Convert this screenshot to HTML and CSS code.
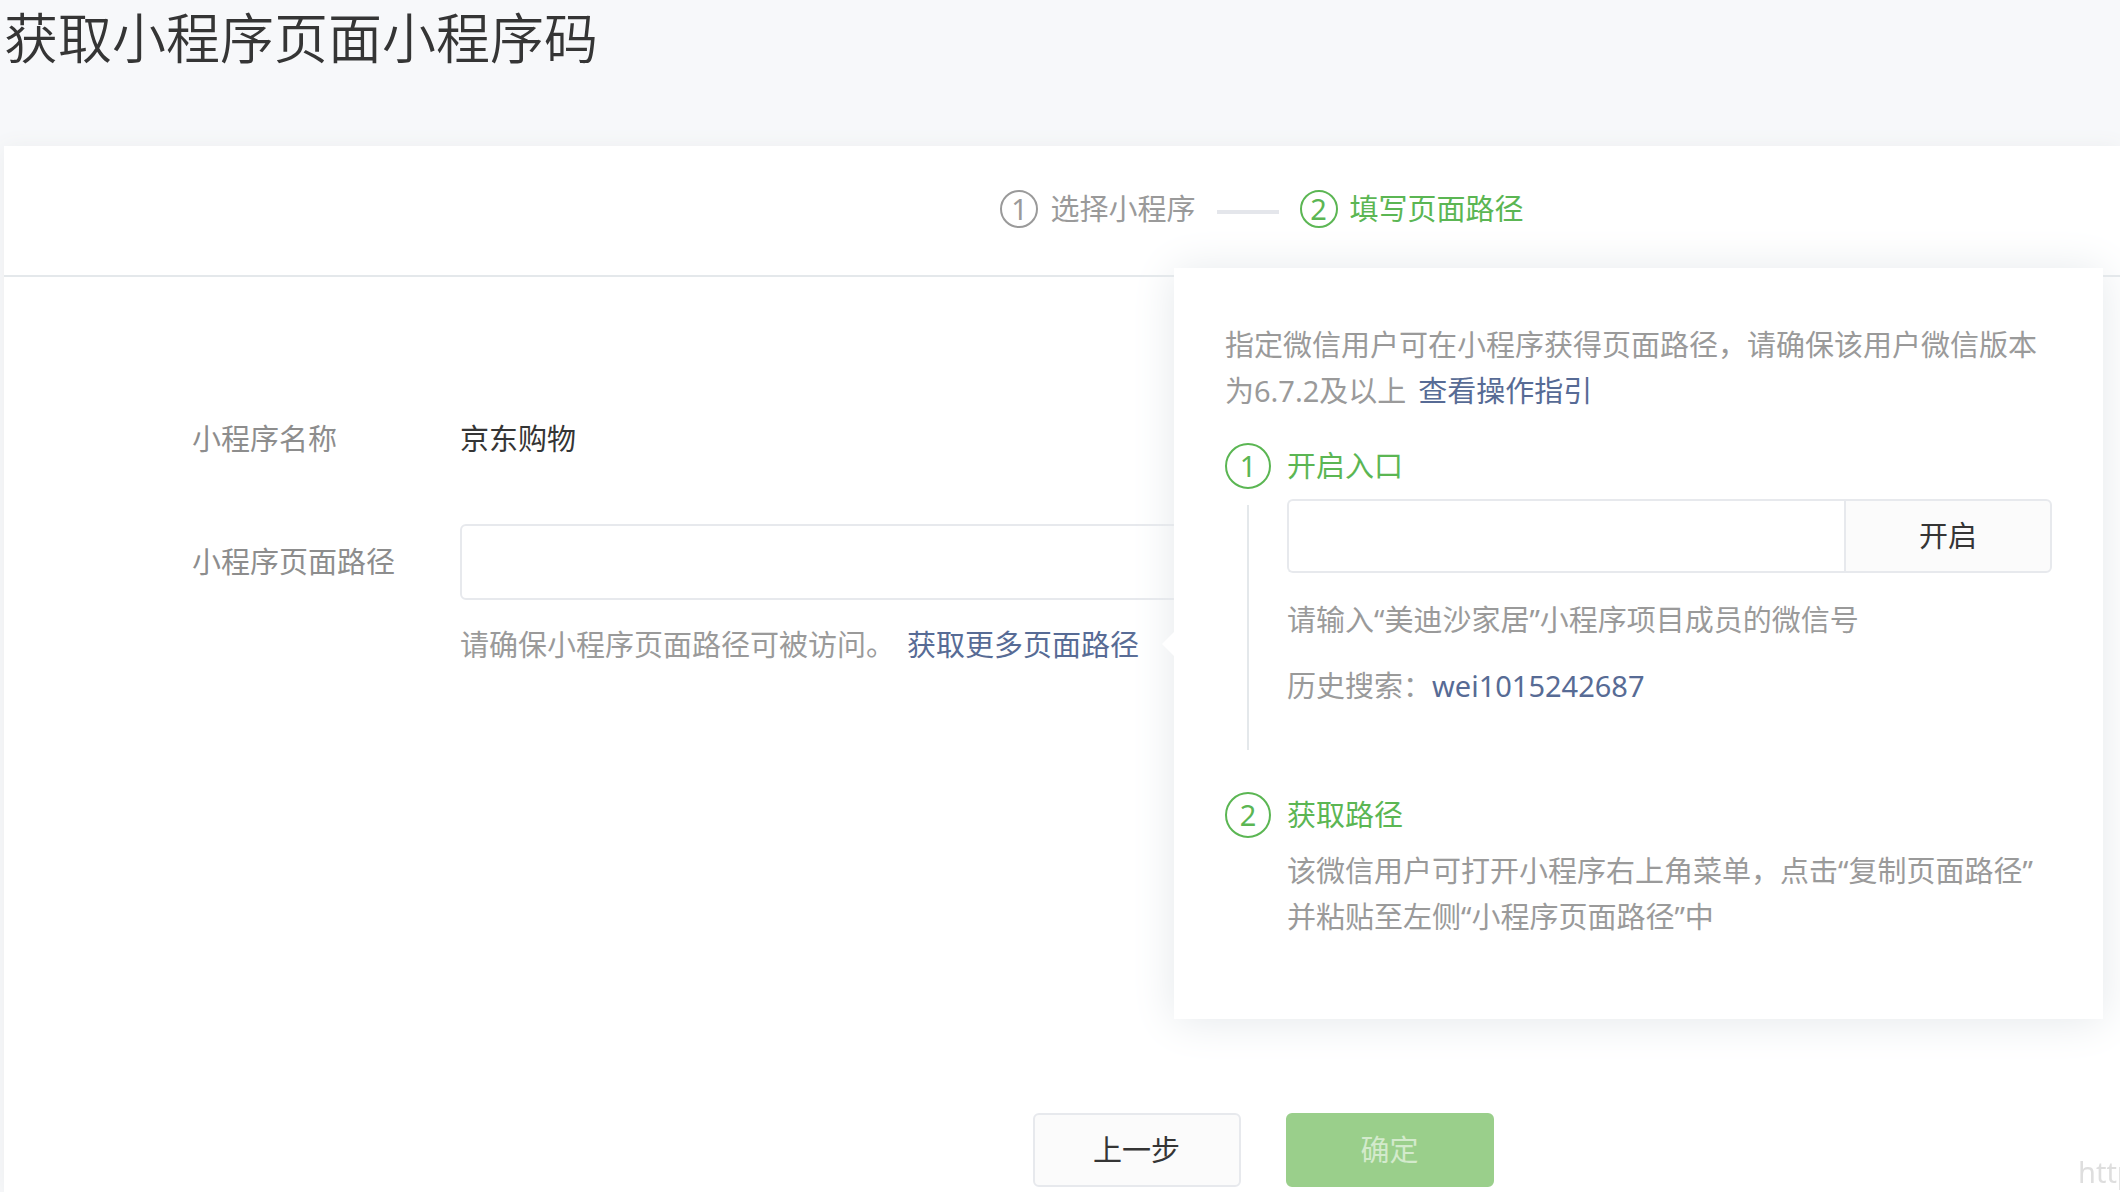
FILE: index.html
```html
<!DOCTYPE html>
<html lang="zh-CN">
<head>
    <meta charset="UTF-8">
    <meta name="viewport" content="width=device-width, initial-scale=1.0">
    <title>获取小程序页面小程序码</title>
    <link rel="stylesheet" href="styles.css">
</head>
<body>
    <h1>获取小程序页面小程序码</h1>
    <main class="card">
        <ol class="steps">
            <li class="step"><span class="num">1</span>选择小程序</li>
            <li class="step-line" aria-hidden="true"></li>
            <li class="step active"><span class="num">2</span>填写页面路径</li>
        </ol>
        <form class="form">
            <div class="row">
                <span class="label">小程序名称</span>
                <span class="value">京东购物</span>
            </div>
            <div class="row">
                <label class="label" for="path">小程序页面路径</label>
                <input class="input" type="text" id="path">
            </div>
            <p class="hint">请确保小程序页面路径可被访问。<a href="#guide">获取更多页面路径</a></p>
            <div class="actions">
                <button type="button" class="btn">上一步</button>
                <button type="submit" class="btn btn-primary" disabled>确定</button>
            </div>
        </form>

        <!-- 获取页面路径的浮层 -->
        <section class="popover" id="guide">
            <p class="intro">指定微信用户可在小程序获得页面路径，请确保该用户微信版本为6.7.2及以上<a href="#help">查看操作指引</a></p>
            <div class="guide">
                <div class="guide-side">
                    <span class="num">1</span>
                    <span class="guide-line"></span>
                </div>
                <div class="guide-body">
                    <h2><label for="wxid">开启入口</label></h2>
                    <div class="search">
                        <input class="input" type="text" id="wxid">
                        <button type="button" class="btn">开启</button>
                    </div>
                    <p class="tip">请输入“美迪沙家居”小程序项目成员的微信号</p>
                    <p class="history">历史搜索：<a href="#history">wei1015242687</a></p>
                </div>
            </div>
            <div class="guide">
                <div class="guide-side">
                    <span class="num">2</span>
                </div>
                <div class="guide-body">
                    <h2>获取路径</h2>
                    <p>该微信用户可打开小程序右上角菜单，点击“复制页面路径”并粘贴至左侧“小程序页面路径”中</p>
                </div>
            </div>
        </section>
    </main>
    <div class="watermark">http</div>
</body>
</html>
```

FILE: styles.css
```css
* {
    box-sizing: border-box;
}
body {
    display: flex;
    flex-direction: column;
    min-height: 100vh;
    margin: 0;
    padding-left: 4px;
    overflow-x: hidden;
    background-color: #f7f8fa;
    color: #353535;
    font-family: "Noto Sans", "Noto Sans CJK SC", sans-serif;
    font-size: 29px;
    line-height: 46px;
}
h1, h2, p, ol {
    margin: 0;
    padding: 0;
    font-weight: normal;
}
h1 {
    height: 146px;
    font-size: 54px;
    font-weight: 350;
    line-height: 76px;
}
h2 {
    font-size: 29px;
    color: #5bb653;
}
a {
    color: #576b95;
    text-decoration: none;
}
.card {
    position: relative;
    display: flex;
    flex: 1;
    flex-direction: column;
    background: #fff;
    box-shadow: 0 1px 20px #eceeef;
}

/* 步骤条 */
.steps {
    display: flex;
    justify-content: center;
    align-items: center;
    height: 131px;
    padding: 0 0 4px 400px;
    border-bottom: 2px solid #e4e8eb;
    list-style: none;
}
.step {
    display: flex;
    align-items: center;
    gap: 12px;
    color: #9a9a9a;
}
.active {
    color: #5bb653;
}
.step-line {
    width: 62px;
    height: 4px;
    margin: 6px 21px 0;
    background: #e4e6eb;
}
.num {
    display: flex;
    justify-content: center;
    align-items: center;
    width: 38px;
    height: 38px;
    border: 2px solid;
    border-radius: 50%;
}

/* 表单 */
.form {
    display: flex;
    flex: 1;
    flex-direction: column;
    padding: 139px 300px 5px 188px;
}
.row {
    display: flex;
    align-items: center;
    margin-bottom: 62px;
}
.row + .row {
    margin-bottom: 22px;
}
.label {
    width: 268px;
    color: #8d8d8d;
}
.input {
    flex: 1;
    min-width: 0;
    height: 76px;
    padding: 0 20px;
    border: 2px solid #e7e9ed;
    border-radius: 6px;
    background: #fff;
    color: inherit;
    font: inherit;
}
.hint {
    padding-left: 268px;
    color: #9a9a9a;
}
.hint a, .intro a {
    margin-left: 12px;
}
.actions {
    display: flex;
    justify-content: center;
    gap: 45px;
    margin-top: auto;
    margin-right: -300px;
    padding-left: 214px;
}
.btn {
    width: 208px;
    height: 74px;
    padding: 0;
    border: 2px solid #e7e9ed;
    border-radius: 6px;
    background: #fbfbfb;
    color: #353535;
    font: inherit;
    cursor: pointer;
}
.btn-primary {
    border-color: #9acf8b;
    background: #9acf8b;
    color: #d3eacc;
    cursor: default;
}

/* 浮层 */
.popover {
    position: absolute;
    top: 122px;
    right: 17px;
    width: 929px;
    padding: 54px 51px 79px;
    background: #fff;
    box-shadow: 0 2px 42px #e4e8eb;
    color: #9a9a9a;
}
.popover::before {
    content: "";
    position: absolute;
    top: 364px;
    left: -12px;
    border: 12px solid transparent;
    border-left: 0;
    border-right-color: #fff;
}
.intro {
    margin-bottom: 29px;
}
.guide {
    display: flex;
    gap: 16px;
}
.guide-side {
    display: flex;
    flex-direction: column;
    align-items: center;
    color: #5bb653;
}
.guide-side .num {
    width: 46px;
    height: 46px;
}
.guide-line {
    flex: 1;
    width: 2px;
    margin: 16px 0 42px;
    background: #e4e8eb;
}
.guide-body {
    flex: 1;
}
.guide-body h2 {
    margin-bottom: 10px;
}
.search {
    display: flex;
    margin: 0 0 24px;
}
.search .input {
    height: 74px;
    border-right: 0;
    border-radius: 6px 0 0 6px;
}
.search .btn {
    border-radius: 0 6px 6px 0;
}
.tip {
    margin-bottom: 20px;
}
.history {
    margin-bottom: 83px;
}

.watermark {
    position: fixed;
    right: 0;
    bottom: 0;
    width: 42px;
    overflow: hidden;
    color: #dedede;
    line-height: 40px;
}
```
